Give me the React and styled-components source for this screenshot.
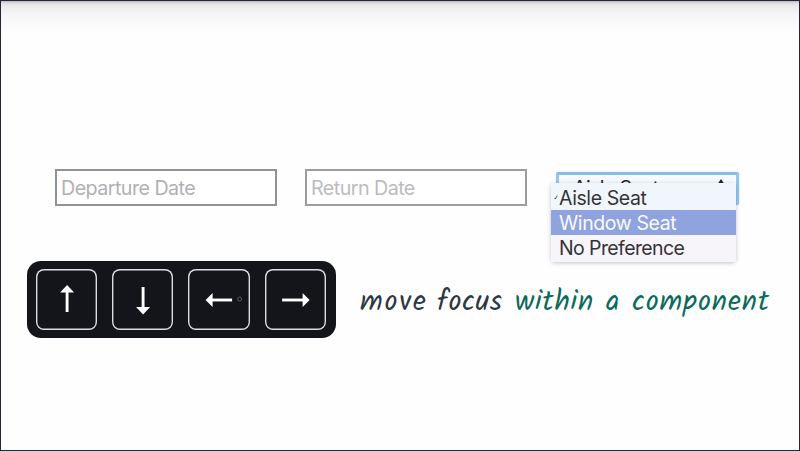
import React from 'react';
import styled, { createGlobalStyle } from 'styled-components';

const GlobalStyle = createGlobalStyle`
  * { box-sizing: border-box; }
  body { margin: 0; background: #fefefe; }
`;

const Slide = styled.main`
  width: 800px;
  height: 451px;
  overflow: hidden;
  border: 1px solid #232735;
  background: linear-gradient(#b9b8bf 0, #dddde0 2px, #ebebec 5px, #f4f4f4 12px, #fafafa 22px, #fefefe 34px);
  font-family: Inter, sans-serif;
`;

const FormRow = styled.div`
  display: flex;
  align-items: flex-start;
  padding: 168px 0 0 54px;
  height: 260px;
`;

const DateField = styled.div`
  width: 222px;
  height: 37px;
  margin-right: 28px;
  padding-left: 4px;
  border: 2px solid ${({ $edge }) => $edge};
  background: #fff;
  color: ${({ $ink }) => $ink};
  font-size: 19.7px;
  line-height: 35px;
  letter-spacing: -0.55px;
  white-space: nowrap;
`;

const Select = styled.div`
  position: relative;
  width: 183px;
  height: 33px;
  margin: 3px 0 0 1px;
  border: 3px solid #8fc8ee;
  border-top-color: #83bde9;
  border-radius: 3px;
  background: #f6faff;
  box-shadow: 0 0 1px #75a9cf;
`;

const SelectValue = styled.div`
  display: flex;
  justify-content: space-between;
  padding: 0 10px 0 14px;
  color: #222;
  font-size: 19.5px;
  line-height: 27px;
  letter-spacing: -0.6px;
`;

const Stepper = styled.svg`
  width: 10px;
  height: 10px;
  margin-top: 4px;
`;

const Menu = styled.div`
  position: absolute;
  left: -8px;
  top: 8px;
  width: 185px;
  height: 79px;
  border-radius: 2px 2px 4px 4px;
  background: #f7f5fa;
  box-shadow: 0 1px 4px rgba(60, 60, 80, 0.3);
`;

const Option = styled.div`
  position: relative;
  height: ${({ $height }) => $height}px;
  padding-left: 8px;
  background: ${({ $active, $tint }) => ($active ? '#8fa3df' : $tint)};
  color: ${({ $active }) => ($active ? '#f8faff' : '#343339')};
  font-size: 19.5px;
  line-height: ${({ $line }) => $line}px;
  letter-spacing: ${({ $tracking }) => $tracking}px;
  white-space: nowrap;
`;

const CheckMark = styled.svg`
  position: absolute;
  left: 3px;
  top: 12px;
  width: 4px;
  height: 5px;
`;

const Legend = styled.div`
  display: flex;
  padding-left: 26px;
`;

const KeyPanel = styled.div`
  display: flex;
  gap: 15px;
  width: 309px;
  height: 77px;
  padding: 8px 0 0 9px;
  border-radius: 14px;
  background: #13151b;
`;

const Key = styled.div`
  display: flex;
  flex: none;
  width: 61.2px;
  height: 61px;
  border-radius: 8px;
  box-shadow: inset 0 0 0 1.4px #dcdde2;
`;

const KeyIcon = styled.svg`
  display: block;
  width: 100%;
  height: 100%;
`;

const Caption = styled.p`
  display: grid;
  grid-template-columns: 77px 78px 91px 26px 140px;
  margin: 22px 0 0 24px;
  font-family: Kalam, "Open Sans", sans-serif;
  line-height: 40px;
`;

const Word = styled.span`
  color: ${({ $accent }) => ($accent ? '#0b6a5c' : '#2d3844')};
  font-size: 28.5px;
  letter-spacing: ${({ $tracking }) => $tracking}px;
  white-space: nowrap;
`;

const arrows = [
  { name: 'up', line: 'M31 22V43', head: 'M31 16L24 23.5H38Z' },
  { name: 'down', line: 'M31 18V39', head: 'M31 45.5L24 38H38Z' },
  { name: 'left', line: 'M23 31H44', head: 'M17.5 31L24.5 24V38Z', cursor: true },
  { name: 'right', line: 'M17 31H38', head: 'M44.5 31L37.5 24V38Z' },
];

const words = [
  { text: 'move', tracking: 1.8 },
  { text: 'focus', tracking: 0.7 },
  { text: 'within', tracking: 0.8, accent: true },
  { text: 'a', tracking: 0, accent: true },
  { text: 'component', tracking: 1, accent: true },
];

export default function App() {
  return (
    <>
      <GlobalStyle />
      <Slide>
        <FormRow>
          <DateField $edge="#929292" $ink="#b2b0b4">Departure Date</DateField>
          <DateField $edge="#9d9d9d" $ink="#bdbbbe">Return Date</DateField>
          <Select>
            <SelectValue>
              Aisle Seat
              <Stepper viewBox="0 0 10 10"><path d="M5 0L9 6H1Z" fill="#222" /></Stepper>
            </SelectValue>
            <Menu>
              <Option $height={27} $line={30} $tint="#f1f5fc" $tracking={-0.4}>
                <CheckMark viewBox="0 0 4 5"><path d="M.5 3L1.2 4L3.3 .6" fill="none" stroke="#555" /></CheckMark>
                Aisle Seat
              </Option>
              <Option $active $height={25} $line={27} $tracking={-0.4}>Window Seat</Option>
              <Option $height={27} $line={27} $tint="#f8f5fa" $tracking={-0.6}>No Preference</Option>
            </Menu>
          </Select>
        </FormRow>
        <Legend>
          <KeyPanel>
            {arrows.map(({ name, line, head, cursor }) => (
              <Key key={name}>
                <KeyIcon viewBox="0 0 61 61" aria-label={name}>
                  <path d={line} stroke="#fff" strokeWidth="2.9" />
                  <path d={head} fill="#fff" />
                  {cursor && <circle cx="51.5" cy="30" r="2" fill="none" stroke="#555861" />}
                </KeyIcon>
              </Key>
            ))}
          </KeyPanel>
          <Caption>
            {words.map(({ text, tracking, accent }) => (
              <Word key={text} $tracking={tracking} $accent={accent}>{text}</Word>
            ))}
          </Caption>
        </Legend>
      </Slide>
    </>
  );
}
